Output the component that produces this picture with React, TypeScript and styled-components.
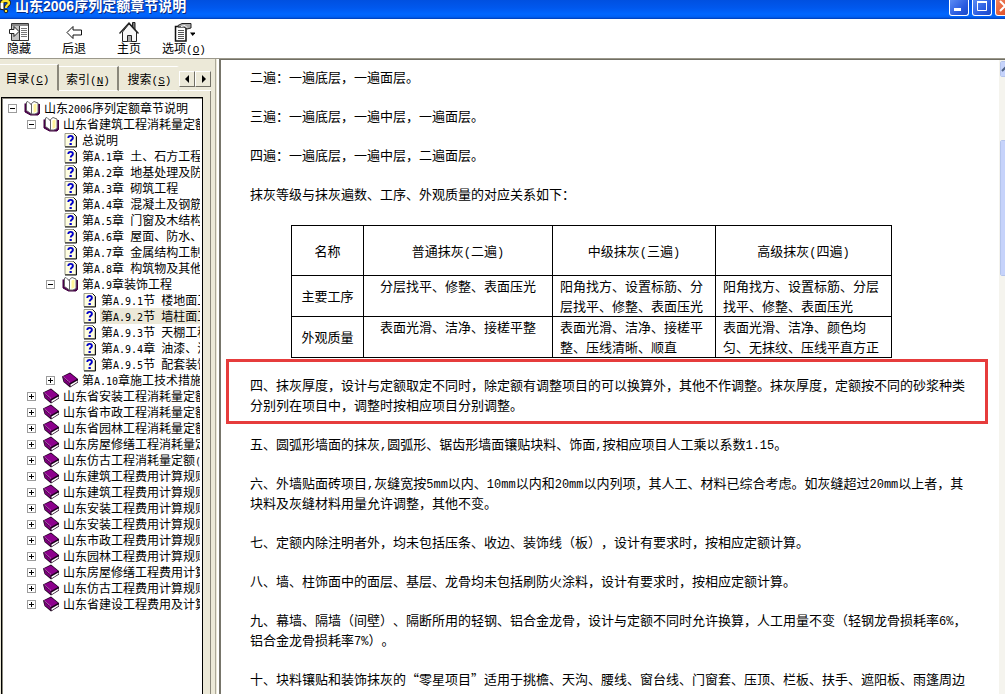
import React, { Fragment } from "react";
import styled, { createGlobalStyle, css } from "styled-components";

const GlobalStyle = createGlobalStyle`
  * { box-sizing: border-box; }
  html, body { margin: 0; padding: 0; }
  body {
    font-family: "Noto Sans CJK SC", "Liberation Sans", sans-serif;
    font-size: 12px;
    color: #000;
    background: #fff;
    text-spacing-trim: space-all;
    text-autospace: no-autospace;
  }
  button {
    font: inherit;
    color: inherit;
    margin: 0;
    padding: 0;
    border: 0;
    background: none;
  }
  p { margin: 0; }
`;

/* ---------- text ---------- */

const Latin = styled.span<{ $small?: boolean }>`
  font-family: ${(p) => (p.$small ? '"DejaVu Sans Mono"' : '"Liberation Mono"')}, monospace;
  font-size: ${(p) => (p.$small ? 10 : 12)}px;
  line-height: 12px;
`;

/* Half-width characters take about half of the width of a Chinese character. */
function Mixed({ text, small }: { text: string; small?: boolean }) {
  return (
    <>
      {text.split(/([\x20-\x7e]+)/).map((part, i) =>
        i % 2 ? (
          <Latin key={i} $small={small}>
            {part}
          </Latin>
        ) : (
          <Fragment key={i}>{part}</Fragment>
        )
      )}
    </>
  );
}

const Mnemonic = styled.span`
  font-family: "Liberation Mono", monospace;
  font-size: 11px;
  line-height: 12px;
`;

function Label({ text, letter }: { text: string; letter?: string }) {
  return (
    <span>
      {text}
      {letter && (
        <Mnemonic>
          (<u>{letter}</u>)
        </Mnemonic>
      )}
    </span>
  );
}

/* ---------- window ---------- */

const Window = styled.div`
  display: flex;
  flex-direction: column;
  height: 100vh;
  overflow: hidden;
`;

const TitleBar = styled.header`
  display: flex;
  align-items: flex-start;
  flex: none;
  height: 19px;
  overflow: hidden;
  background: linear-gradient(#0050e0 0, #0058ee 8px, #0066ff 14px, #0060f4 17px, #003cb4 19px);
`;

const Title = styled.h1`
  flex: 1;
  margin: 0 0 0 4px;
  font: bold 14px/12px "Liberation Sans", "Noto Sans CJK SC", sans-serif;
  color: #fff;
  text-shadow: 1px 1px #0a2a80;
  white-space: nowrap;
`;

const WindowControls = styled.div`
  display: flex;
  gap: 3px;
  margin-right: -10px;
`;

const WindowButton = styled.button<{ $close?: boolean }>`
  display: flex;
  width: 20px;
  height: 16px;
  border: 1px solid #fff;
  border-top: 0;
  border-radius: 0 0 3px 3px;
  background: ${(p) =>
    p.$close
      ? "linear-gradient(135deg, #f0805a, #d8401a)"
      : "linear-gradient(135deg, #5c8cf4, #2a5be0 60%, #1b49c8)"};
`;

const Toolbar = styled.nav`
  display: flex;
  gap: 17px;
  flex: none;
  height: 40px;
  padding-top: 3px;
  border-bottom: 1px solid #9b988b;
  background: #fff;
`;

const ToolButton = styled.button`
  display: flex;
  flex-direction: column;
  align-items: center;
  width: 38px;
  line-height: 12px;
  white-space: nowrap;

  svg { display: block; flex: none; }
`;

const Panes = styled.div`
  display: flex;
  flex: 1;
  min-height: 0;
`;

/* ---------- navigation pane ---------- */

const Sidebar = styled.aside`
  display: flex;
  flex-direction: column;
  flex: none;
  width: 211px;
  background: #ece9d8;
`;

const TabStrip = styled.div`
  display: flex;
  align-items: flex-end;
  flex: none;
  height: 32px;
`;

const Tab = styled.button<{ $active?: boolean }>`
  width: 60px;
  height: 25px;
  line-height: 24px;
  border-top: 1px solid #fff;
  border-right: 2px solid #8a877a;
  border-bottom: 1px solid #fff;
  white-space: nowrap;

  &:last-of-type {
    padding-left: 3px;
    border-right-color: transparent;
  }

  ${(p) =>
    p.$active &&
    css`
      width: 59px;
      height: 27px;
      padding-right: 2px;
      border-bottom-color: transparent;
    `}
`;

const TabScroller = styled.div`
  display: flex;
  flex: 1;
  align-self: flex-end;
  padding-bottom: 3px;
  border-bottom: 1px solid #fff;
`;

const ScrollArrow = styled.button`
  display: flex;
  align-items: center;
  justify-content: center;
  width: 16px;
  height: 16px;
  border: 1px solid;
  border-color: #fff #716f64 #716f64 #fff;
`;

const TabPage = styled.div`
  display: flex;
  flex: 1;
  min-height: 0;
  padding: 6px 7px 0 1px;
  border-right: 1px solid #8a877a;
`;

const TreeBox = styled.div`
  flex: 1;
  min-width: 0;
  overflow: hidden;
  padding-right: 2px;
  border: 1px solid #000;
  border-bottom: 0;
  background: #fff;
  box-shadow: inset 1px 1px #8c8a7e;
`;

const Tree = styled.ul`
  margin: 0;
  padding: 2px 0 0;
  list-style: none;
  overflow: hidden;
`;

const TreeRow = styled.li<{ $level: number }>`
  display: flex;
  align-items: center;
  height: 16px;
  padding-left: ${(p) => 6 + 19 * p.$level}px;
  white-space: nowrap;
`;

const Toggle = styled.button`
  flex: none;
  display: flex;
  width: 9px;
  height: 9px;
  background: #fff;
`;

const ToggleSpace = styled.span`
  flex: none;
  width: 9px;
`;

const TreeIcon = styled.span`
  flex: none;
  display: flex;
  justify-content: center;
  width: 17px;
  margin: 0 2px 0 7px;
`;

const TreeLink = styled.a<{ $selected?: boolean }>`
  flex: 1;
  padding-left: 1px;
  line-height: 16px;
  color: #000;
  text-decoration: none;
  background: ${(p) => (p.$selected ? "#ece9d8" : "none")};
`;

const Splitter = styled.div`
  flex: none;
  width: 8px;
  border-right: 2px solid #fff;
  background: linear-gradient(90deg, #ece9d8 4px, #aca899 4px, #aca899 5px, #ece9d8 5px);
`;

/* ---------- document pane ---------- */

const Document = styled.main`
  flex: 1;
  min-width: 0;
  overflow: hidden;
  padding: 7px 31px 0 29px;
  border-top: 1px solid #716f64;
  border-left: 2px solid #77756a;
  font-size: 13px;
  line-height: 20px;
`;

const Paragraph = styled.p`
  margin-bottom: 19px;
`;

const Marked = styled(Paragraph)`
  position: relative;

  &::after {
    content: "";
    position: absolute;
    inset: -16px -20px -9px -24px;
    border: 3px solid #e63c3c;
    pointer-events: none;
  }
`;

const Grades = styled.table`
  width: 601px;
  margin: 21px 0 17px 41px;
  border-collapse: collapse;
  table-layout: fixed;

  th, td {
    padding: 0 7px;
    border: 1px solid #000;
    font-weight: normal;
    text-align: left;
    vertical-align: top;
  }
  thead th, tbody th {
    padding: 0;
    text-align: center;
    vertical-align: middle;
  }
  thead th { height: 50px; }
  td:nth-of-type(1) { text-align: center; }
`;

const ScrollBar = styled.div`
  display: flex;
  flex-direction: column;
  flex: none;
  gap: 63px;
  width: 6px;
  padding: 1px 0 0 1px;
  border-top: 1px solid #716f64;
  background: #f5f4ee;
  overflow: hidden;
`;

const ScrollPart = styled.div<{ $height: number }>`
  display: flex;
  align-items: center;
  flex: none;
  width: 15px;
  height: ${(p) => p.$height}px;
  border: 1px solid #fff;
  border-radius: 2px;
  outline: 1px solid #b4c4ec;
  outline-offset: -1px;
  background: #c6d3fb;
`;

/* ---------- drawings ---------- */

const HelpIcon = () => (
  <svg width="11" height="14" viewBox="0 0 11 14" aria-hidden="true">
    <path d="M0 1l4 1v8l-4-1z" fill="#fff" stroke="#111" />
    <path d="M2 3c0-3 7-3 7 0 0 2-3 2-3 5" fill="none" stroke="#222" strokeWidth="4" />
    <path d="M2 3c0-3 7-3 7 0 0 2-3 2-3 5" fill="none" stroke="#ffe62e" strokeWidth="2.400" />
    <circle cx="6" cy="11" r="1.800" fill="#ffe62e" stroke="#222" />
  </svg>
);

const HideIcon = () => (
  <svg width="20" height="20" viewBox="0 0 20 20" aria-hidden="true">
    <path d="M2.500 1.500h17v17h-17z" fill="#fff" stroke="#333" />
    <path d="M3 2h16v2H3z" fill="#888" />
    <path d="M3 4h7v14H3z" fill="#c4c4c4" />
    <path d="M10.500 4v14" stroke="#333" />
    <path d="M12 6.500h6M12 8.500h6M12 10.500h6M12 12.500h6M12 14.500h6" stroke="#777" />
    <path d="M.5 7.500H5V4.500l5 5-5 5v-3H.5z" fill="#fff" stroke="#222" />
  </svg>
);

const BackIcon = () => (
  <svg width="20" height="20" viewBox="0 0 20 20" aria-hidden="true">
    <path d="M3 10.500l6-6v3.500h8.500v5H9v3.500z" fill="#fff" stroke="#111" />
  </svg>
);

const HomeIcon = () => (
  <svg width="22" height="20" viewBox="0 0 22 20" aria-hidden="true">
    <path d="M14.500 6V.5h2.500V9" fill="#777" stroke="#222" />
    <path d="M4.500 10v9.500h14V10L11 2z" fill="#f7f7f7" stroke="#222" />
    <path d="M1.500 11.500L11 1l9.500 10.500" fill="none" stroke="#222" strokeWidth="1.300" />
    <path d="M9.500 19.500v-6h4v6" fill="#aaa" stroke="#222" />
  </svg>
);

const OptionsIcon = () => (
  <svg width="22" height="20" viewBox="0 0 22 20" aria-hidden="true">
    <path d="M2.500 4.500h10.500v14.500H2.500z" fill="#fff" stroke="#111" strokeWidth="1.500" />
    <path d="M5 8.500h6M5 10.500h6M5 12.500h6M5 14.500h6M5 16.500h6" stroke="#555" />
    <path d="M5 3.500l4-2h9v4.500l-4 1-3-2H5z" fill="#aaa" stroke="#222" />
    <path d="M8 4.500l4-1 2 2" fill="none" stroke="#fff" />
    <path d="M17 10.500h5.500L19.700 14z" fill="#000" />
  </svg>
);

const OpenBook = () => (
  <svg width="17" height="16" viewBox="0 0 17 16" aria-hidden="true">
    <path d="M1 3.500v8.500l5.500 3h7.500l1.500-1.500V4" fill="#500050" stroke="#400040" />
    <path d="M2.500 10.500V2l1.500-.5L7.500 5v9z" fill="#fff" stroke="#666" />
    <path d="M7.500 14V3.500L10 1.500l4 1.500v9.500l-3 1.500z" fill="#fff" stroke="#666" />
    <path d="M9.500 4.500l3-1v8l-3 1.500z" fill="#fff59a" />
  </svg>
);

const ClosedBook = () => (
  <svg width="17" height="16" viewBox="0 0 17 16" aria-hidden="true">
    <path d="M0 4.500L8 .5l8 6.500v3.500L8 15.500 1.500 10z" fill="#1c001c" />
    <path d="M1 4.500L8 1.500 15 7l-7 4z" fill="#8c008c" />
    <path d="M1 5.500l6.500 5.500v3L2 9.500z" fill="#7a007a" />
    <path d="M8.500 12.500L15.500 8.500v1.500l-7 4.500z" fill="#fff" />
    <path d="M1.500 5l6.500 5.500" stroke="#f0b8f0" strokeWidth=".8" strokeDasharray="1.500 1" />
  </svg>
);

const TopicIcon = () => (
  <svg width="13" height="16" viewBox="0 0 13 16" aria-hidden="true">
    <path d="M1 1.500h8.500l2.500 2.500v10.500H1z" fill="#fffee0" stroke="#9a9a8a" />
    <path d="M9.500 1.500l3 3v10.500H1" fill="none" stroke="#111" />
    <path d="M4.300 6c0-2.800 4.600-2.800 4.600 0 0 1.500-2.200 1.500-2.200 3.500" fill="none" stroke="#0000c8" strokeWidth="1.900" />
    <path d="M5.500 11h2.300v2H5.500z" fill="#0000c8" />
  </svg>
);

const ToggleIcon = ({ open }: { open: boolean }) => (
  <svg width="9" height="9" viewBox="0 0 9 9" shapeRendering="crispEdges" aria-hidden="true">
    <path d="M.5.5h8v8h-8z" fill="#fff" stroke="#9c9c9c" />
    <path d={open ? "M2 4.500h5" : "M2 4.500h5M4.500 2v5"} stroke="#000" />
  </svg>
);

/* ---------- data ---------- */

type Kind = "open" | "closed" | "topic";
type Entry = [level: number, kind: Kind, text: string];

const entries: Entry[] = [
  [0, "open", "山东2006序列定额章节说明"],
  [1, "open", "山东省建筑工程消耗量定额"],
  [2, "topic", "总说明"],
  [2, "topic", "第A.1章 土、石方工程"],
  [2, "topic", "第A.2章 地基处理及防"],
  [2, "topic", "第A.3章 砌筑工程"],
  [2, "topic", "第A.4章 混凝土及钢筋"],
  [2, "topic", "第A.5章 门窗及木结构"],
  [2, "topic", "第A.6章 屋面、防水、"],
  [2, "topic", "第A.7章 金属结构工制"],
  [2, "topic", "第A.8章 构筑物及其他"],
  [2, "open", "第A.9章装饰工程"],
  [3, "topic", "第A.9.1节 楼地面工"],
  [3, "topic", "第A.9.2节 墙柱面工"],
  [3, "topic", "第A.9.3节 天棚工程"],
  [3, "topic", "第A.9.4章 油漆、涂"],
  [3, "topic", "第A.9.5节 配套装饰"],
  [2, "closed", "第A.10章施工技术措施"],
  [1, "closed", "山东省安装工程消耗量定额"],
  [1, "closed", "山东省市政工程消耗量定额"],
  [1, "closed", "山东省园林工程消耗量定额"],
  [1, "closed", "山东房屋修缮工程消耗量定"],
  [1, "closed", "山东仿古工程消耗量定额("],
  [1, "closed", "山东建筑工程费用计算规则"],
  [1, "closed", "山东建筑工程费用计算规则"],
  [1, "closed", "山东安装工程费用计算规则"],
  [1, "closed", "山东安装工程费用计算规则"],
  [1, "closed", "山东市政工程费用计算规则"],
  [1, "closed", "山东园林工程费用计算规则"],
  [1, "closed", "山东房屋修缮工程费用计算"],
  [1, "closed", "山东仿古工程费用计算规则"],
  [1, "closed", "山东省建设工程费用及计算"],
];
const selectedEntry = 13;

const icons = { open: OpenBook, closed: ClosedBook, topic: TopicIcon };

const tools = [
  { Icon: HideIcon, text: "隐藏" },
  { Icon: BackIcon, text: "后退" },
  { Icon: HomeIcon, text: "主页" },
  { Icon: OptionsIcon, text: "选项", letter: "O" },
];

const intro = [
  "二遍：一遍底层，一遍面层。",
  "三遍：一遍底层，一遍中层，一遍面层。",
  "四遍：一遍底层，一遍中层，二遍面层。",
  "抹灰等级与抹灰遍数、工序、外观质量的对应关系如下：",
];

const heads = ["名称", "普通抹灰(二遍)", "中级抹灰(三遍)", "高级抹灰(四遍)"];

const rows = [
  [
    "主要工序",
    "分层找平、修整、表面压光",
    "阳角找方、设置标筋、分层找平、修整、表面压光",
    "阳角找方、设置标筋、分层找平、修整、表面压光",
  ],
  [
    "外观质量",
    "表面光滑、洁净、接槎平整",
    "表面光滑、洁净、接槎平整、压线清晰、顺直",
    "表面光滑、洁净、颜色均匀、无抹纹、压线平直方正",
  ],
];

const marked =
  "四、抹灰厚度，设计与定额取定不同时，除定额有调整项目的可以换算外，其他不作调整。抹灰厚度，定额按不同的砂浆种类分别列在项目中，调整时按相应项目分别调整。";

const clauses = [
  "五、圆弧形墙面的抹灰,圆弧形、锯齿形墙面镶贴块料、饰面,按相应项目人工乘以系数1.15。",
  "六、外墙贴面砖项目,灰缝宽按5mm以内、10mm以内和20mm以内列项，其人工、材料已综合考虑。如灰缝超过20mm以上者，其块料及灰缝材料用量允许调整，其他不变。",
  "七、定额内除注明者外，均未包括压条、收边、装饰线（板），设计有要求时，按相应定额计算。",
  "八、墙、柱饰面中的面层、基层、龙骨均未包括刷防火涂料，设计有要求时，按相应定额计算。",
  "九、幕墙、隔墙（间壁）、隔断所用的轻钢、铝合金龙骨，设计与定额不同时允许换算，人工用量不变（轻钢龙骨损耗率6%，铝合金龙骨损耗率7%）。",
  "十、块料镶贴和装饰抹灰的“零星项目”适用于挑檐、天沟、腰线、窗台线、门窗套、压顶、栏板、扶手、遮阳板、雨篷周边",
];

export default function App() {
  return (
    <Window>
      <GlobalStyle />
      <TitleBar>
        <HelpIcon />
        <Title>山东2006序列定额章节说明</Title>
        <WindowControls>
          <WindowButton aria-label="最小化">
            <svg width="18" height="15" aria-hidden="true">
              <path d="M4 8h7v3H4z" fill="#fff" />
            </svg>
          </WindowButton>
          <WindowButton aria-label="最大化">
            <svg width="18" height="15" aria-hidden="true">
              <path d="M4.500 2h9v8.500h-9z" fill="none" stroke="#fff" />
              <path d="M4 1h10v2H4z" fill="#fff" />
            </svg>
          </WindowButton>
          <WindowButton aria-label="关闭" $close>
            <svg width="18" height="15" aria-hidden="true">
              <path d="M4 1l10 10M14 1L4 11" stroke="#fff" strokeWidth="2" />
            </svg>
          </WindowButton>
        </WindowControls>
      </TitleBar>

      <Toolbar>
        {tools.map(({ Icon, text, letter }) => (
          <ToolButton key={text}>
            <Icon />
            <Label text={text} letter={letter} />
          </ToolButton>
        ))}
      </Toolbar>

      <Panes>
        <Sidebar>
          <TabStrip>
            <Tab $active>
              <Label text="目录" letter="C" />
            </Tab>
            <Tab>
              <Label text="索引" letter="N" />
            </Tab>
            <Tab>
              <Label text="搜索" letter="S" />
            </Tab>
            <TabScroller>
              <ScrollArrow aria-label="向左">
                <svg width="5" height="8" aria-hidden="true">
                  <path d="M4 0v8L0 4z" />
                </svg>
              </ScrollArrow>
              <ScrollArrow aria-label="向右">
                <svg width="5" height="8" aria-hidden="true">
                  <path d="M1 0v8l4-4z" />
                </svg>
              </ScrollArrow>
            </TabScroller>
          </TabStrip>
          <TabPage>
            <TreeBox>
              <Tree>
                {entries.map(([level, kind, text], i) => {
                  const Icon = icons[kind];
                  return (
                    <TreeRow key={i} $level={level}>
                      {kind === "topic" ? (
                        <ToggleSpace />
                      ) : (
                        <Toggle aria-label={kind === "open" ? "折叠" : "展开"}>
                          <ToggleIcon open={kind === "open"} />
                        </Toggle>
                      )}
                      <TreeIcon>
                        <Icon />
                      </TreeIcon>
                      <TreeLink href="#" $selected={i === selectedEntry}>
                        <Mixed text={text} small />
                      </TreeLink>
                    </TreeRow>
                  );
                })}
              </Tree>
            </TreeBox>
          </TabPage>
        </Sidebar>
        <Splitter />

        <Document>
          {intro.map((text) => (
            <Paragraph key={text}>{text}</Paragraph>
          ))}
          <Grades>
            <colgroup>
              <col style={{ width: 72 }} />
              <col style={{ width: 189 }} />
              <col style={{ width: 163 }} />
              <col style={{ width: 176 }} />
            </colgroup>
            <thead>
              <tr>
                {heads.map((text) => (
                  <th key={text} scope="col">
                    <Mixed text={text} />
                  </th>
                ))}
              </tr>
            </thead>
            <tbody>
              {rows.map(([name, ...cells]) => (
                <tr key={name}>
                  <th scope="row">{name}</th>
                  {cells.map((text, i) => (
                    <td key={i}>{text}</td>
                  ))}
                </tr>
              ))}
            </tbody>
          </Grades>
          <Marked>{marked}</Marked>
          {clauses.map((text) => (
            <Paragraph key={text}>
              <Mixed text={text} />
            </Paragraph>
          ))}
        </Document>
        <ScrollBar>
          <ScrollPart $height={16}>
            <svg width="8" height="6" aria-hidden="true">
              <path d="M1 5l4-4 3 3" fill="none" stroke="#4d6185" strokeWidth="2" />
            </svg>
          </ScrollPart>
          <ScrollPart $height={136} />
        </ScrollBar>
      </Panes>
    </Window>
  );
}
